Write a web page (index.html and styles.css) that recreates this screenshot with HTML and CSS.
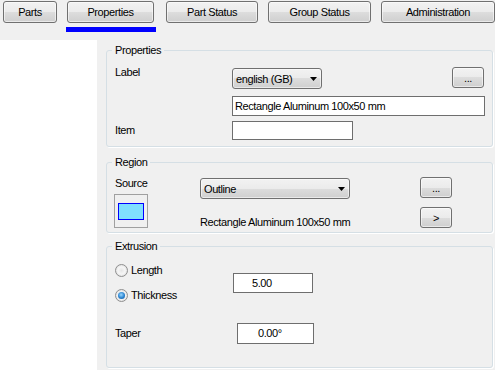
FILE: index.html
```html
<!DOCTYPE html>
<html lang="en">
<head>
  <meta charset="UTF-8">
  <title>Part Properties</title>
  <link rel="stylesheet" href="styles.css">
</head>
<body>
  <div class="tabs">
    <div class="tab"><button class="btn tab-btn tab-parts">Parts</button></div>
    <div class="tab"><button class="btn tab-btn tab-props">Properties</button><div class="tab-bar"></div></div>
    <div class="tab"><button class="btn tab-btn tab-status">Part Status</button></div>
    <div class="tab"><button class="btn tab-btn tab-group">Group Status</button></div>
    <div class="tab"><button class="btn tab-btn tab-admin">Administration</button></div>
  </div>

  <div class="main">
    <div class="side"></div>
    <div class="content">

      <fieldset class="group group-props">
        <legend>Properties</legend>
        <div class="row props-label">
          <span class="lbl props-lbl">Label</span>
          <div class="btn combo combo-lang">
            <span>english (GB)</span>
            <svg class="arrow" width="7" height="4" viewBox="0 0 7 4"><path d="M0 0h7L3.5 4z" fill="#000"/></svg>
          </div>
          <button class="btn small-btn props-dots">...</button>
        </div>
        <div class="row props-name">
          <div class="tb tb-name">Rectangle Aluminum 100x50 mm</div>
        </div>
        <div class="row props-item">
          <span class="lbl props-lbl">Item</span>
          <div class="tb tb-item"></div>
        </div>
      </fieldset>

      <fieldset class="group group-region">
        <legend>Region</legend>
        <div class="row region-row">
          <div class="region-left">
            <span class="lbl source-lbl">Source</span>
            <div class="preview"><div class="preview-rect"></div></div>
          </div>
          <div class="region-mid">
            <div class="btn combo combo-source">
              <span>Outline</span>
              <svg class="arrow" width="7" height="4" viewBox="0 0 7 4"><path d="M0 0h7L3.5 4z" fill="#000"/></svg>
            </div>
            <span class="lbl source-name">Rectangle Aluminum 100x50 mm</span>
          </div>
          <div class="region-right">
            <button class="btn small-btn region-dots">...</button>
            <button class="btn small-btn region-go">&gt;</button>
          </div>
        </div>
      </fieldset>

      <fieldset class="group group-extrusion">
        <legend>Extrusion</legend>
        <div class="row extr-row">
          <div class="radios">
            <div class="radio-row"><span class="radio"></span><span class="lbl">Length</span></div>
            <div class="radio-row"><span class="radio checked"></span><span class="lbl">Thickness</span></div>
          </div>
          <div class="tb tb-thick">5.00</div>
        </div>
        <div class="row taper-row">
          <span class="lbl taper-lbl">Taper</span>
          <div class="tb tb-taper">0.00°</div>
        </div>
      </fieldset>

    </div>
  </div>
</body>
</html>
```

FILE: styles.css
```css
body {
  margin: 0;
  width: 495px;
  height: 370px;
  overflow: hidden;
  background: #f0f0f0;
  color: #000;
  font-family: "Liberation Sans", Arial, sans-serif;
  font-size: 11px;
  letter-spacing: -0.4px;
}

/* top tab buttons */
.tabs {
  display: flex;
  gap: 10px;
  height: 39px;
  padding: 1px 0 0 3px;
}

.tab {
  display: flex;
  flex-direction: column;
}

.btn {
  font: inherit;
  letter-spacing: inherit;
  color: #000;
  margin: 0;
  padding: 0;
  box-sizing: border-box;
  border: 1px solid #707070;
  border-radius: 3px;
  background: linear-gradient(to bottom, #f2f2f2 0%, #ebebeb 50%, #dddddd 50%, #cfcfcf 100%);
  box-shadow: inset 0 0 0 1px rgba(255, 255, 255, 0.55);
}

.tab-btn { height: 22px; }
.tab-parts { width: 54px; }
.tab-props { width: 87px; }
.tab-status { width: 92px; }
.tab-group { width: 103px; }
.tab-admin { width: 114px; }

.tab-bar {
  width: 90px;
  height: 5px;
  margin: 4px 0 0 -1px;
  background: #0000ff;
}

/* body area */
.main {
  display: flex;
  height: 331px;
}

.side {
  width: 97px;
  background: #fff;
}

.content {
  flex: 1;
  padding: 4px 2px 0 9px;
}

.group {
  margin: 0;
  padding: 0 0 6px 8px;
  min-width: 0;
  border: 1px solid #d5dfe5;
  border-radius: 3px;
  box-shadow: 1px 1px 0 #fff;
}

.group legend {
  margin-left: -3px;
  padding: 0 3px;
  line-height: 13px;
}

.row {
  display: flex;
}

.lbl {
  line-height: 13px;
  white-space: nowrap;
}

.combo {
  display: flex;
  align-items: center;
  height: 21px;
  padding-left: 3px;
  white-space: nowrap;
}

.combo .arrow {
  margin: 0 4px 0 auto;
}

.small-btn {
  width: 32px;
  height: 21px;
  text-align: center;
}

.tb {
  box-sizing: border-box;
  height: 20px;
  padding-left: 2px;
  line-height: 18px;
  background: #fff;
  border: 1px solid #6e6e6e;
  white-space: nowrap;
}

/* Properties */
.props-label {
  height: 23px;
  margin-top: 9px;
  align-items: flex-start;
}

.props-lbl {
  width: 117px;
  flex-shrink: 0;
}

.combo-lang {
  width: 90px;
  margin-top: 2px;
}

.props-dots {
  margin: 1px 0 0 130px;
}

.props-name { margin-top: 7px; }

.tb-name {
  width: 253px;
  margin-left: 117px;
}

.props-item {
  margin-top: 5px;
  align-items: center;
}

.tb-item {
  width: 121px;
  height: 19px;
}

/* Region */
.group-region {
  margin-top: 9px;
  padding-bottom: 3px;
}

.region-row { align-items: flex-start; }

.region-left {
  display: flex;
  flex-direction: column;
  width: 85px;
}

.source-lbl { margin-top: 8px; }

.preview {
  display: flex;
  align-items: center;
  justify-content: center;
  box-sizing: border-box;
  width: 34px;
  height: 34px;
  margin: 4px 0 0 -1px;
  border: 1px solid #a0a0a0;
}

.preview-rect {
  box-sizing: border-box;
  width: 26px;
  height: 17px;
  background: #80dfff;
  border: 1px solid #0000ff;
}

.region-mid {
  display: flex;
  flex-direction: column;
  width: 150px;
}

.combo-source { margin-top: 9px; }

.source-name { margin-top: 17px; }

.region-right {
  display: flex;
  flex-direction: column;
  margin-left: 70px;
}

.region-dots { margin-top: 8px; }
.region-go { margin-top: 9px; }

/* Extrusion */
.group-extrusion {
  margin-top: 7px;
  padding-bottom: 23px;
}

.extr-row {
  margin-top: 11px;
  align-items: center;
}

.radios {
  display: flex;
  flex-direction: column;
  gap: 12px;
  width: 118px;
}

.radio-row {
  display: flex;
  align-items: center;
  gap: 3px;
}

.radio {
  display: flex;
  align-items: center;
  justify-content: center;
  box-sizing: border-box;
  width: 13px;
  height: 13px;
  border-radius: 50%;
  border: 1px solid #8f8f8f;
  background: radial-gradient(circle at 50% 50%, #e6e6e6 0%, #f6f6f6 45%, #d0d0d0 100%);
}

.radio.checked::after {
  content: "";
  width: 7px;
  height: 7px;
  border-radius: 50%;
  background: radial-gradient(circle at 45% 40%, #9ad8ff 0%, #2a83d0 55%, #0c4d8e 100%);
}

.tb-thick {
  width: 80px;
  padding-left: 18px;
}

.taper-row {
  margin-top: 21px;
  align-items: center;
}

.taper-lbl { width: 122px; }

.tb-taper {
  width: 77px;
  height: 21px;
  padding-left: 20px;
  line-height: 19px;
}
```
